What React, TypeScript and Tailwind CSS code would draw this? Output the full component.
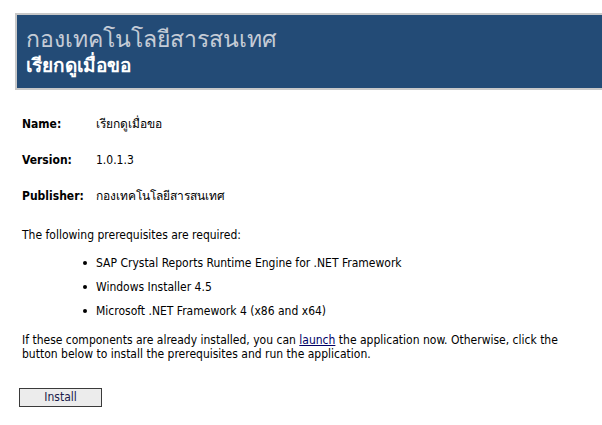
import React from "react";

const font = { fontFamily: 'Tahoma, "DejaVu Sans Condensed", "Noto Sans", sans-serif' };

export default function App() {
  return (
    <div className="w-[602px] h-[425px] bg-white overflow-hidden text-black" style={font}>
      <div className="pt-[13px] pl-[15px]">
        <div className="w-[600px] h-[77px] border-2 border-[#c8c8c8] border-r-0 bg-[#234b76] pl-[9px] pt-[11px]">
          <div className="text-[23px] leading-[26px] text-[#c5ccd6]">กองเทคโนโลยีสารสนเทศ</div>
          <div className="text-[19px] leading-[26px] text-white font-bold">เรียกดูเมื่อขอ</div>
        </div>
      </div>
      <div className="pl-[22px] text-[12px] leading-[14px]">
        <div className="flex mt-[27px]">
          <div className="w-[74px] font-bold">Name:</div>
          <div>เรียกดูเมื่อขอ</div>
        </div>
        <div className="flex mt-[22px]">
          <div className="w-[74px] font-bold">Version:</div>
          <div>1.0.1.3</div>
        </div>
        <div className="flex mt-[22px]">
          <div className="w-[74px] font-bold">Publisher:</div>
          <div>กองเทคโนโลยีสารสนเทศ</div>
        </div>
        <div className="mt-[25px]">The following prerequisites are required:</div>
        <ul className="mt-[14px] pl-[61px] flex flex-col gap-[10px]">
          <li className="flex items-center">
            <span className="w-[13px] shrink-0 flex"><span className="w-[4px] h-[4px] rounded-full bg-black" /></span>
            SAP Crystal Reports Runtime Engine for .NET Framework
          </li>
          <li className="flex items-center">
            <span className="w-[13px] shrink-0 flex"><span className="w-[4px] h-[4px] rounded-full bg-black" /></span>
            Windows Installer 4.5
          </li>
          <li className="flex items-center">
            <span className="w-[13px] shrink-0 flex"><span className="w-[4px] h-[4px] rounded-full bg-black" /></span>
            Microsoft .NET Framework 4 (x86 and x64)
          </li>
        </ul>
        <p className="mt-[15px] w-[560px]">
          If these components are already installed, you can <span className="underline text-[#000066]">launch</span> the application now. Otherwise, click the button below to install the prerequisites and run the application.
        </p>
      </div>
      <div className="pl-[19px] mt-[23px]">
        <button className="w-[83px] h-[19px] border border-[#3a3a3a] bg-[#ececec] text-[12px] leading-[14px] text-[#1a1a4a]">Install</button>
      </div>
    </div>
  );
}
